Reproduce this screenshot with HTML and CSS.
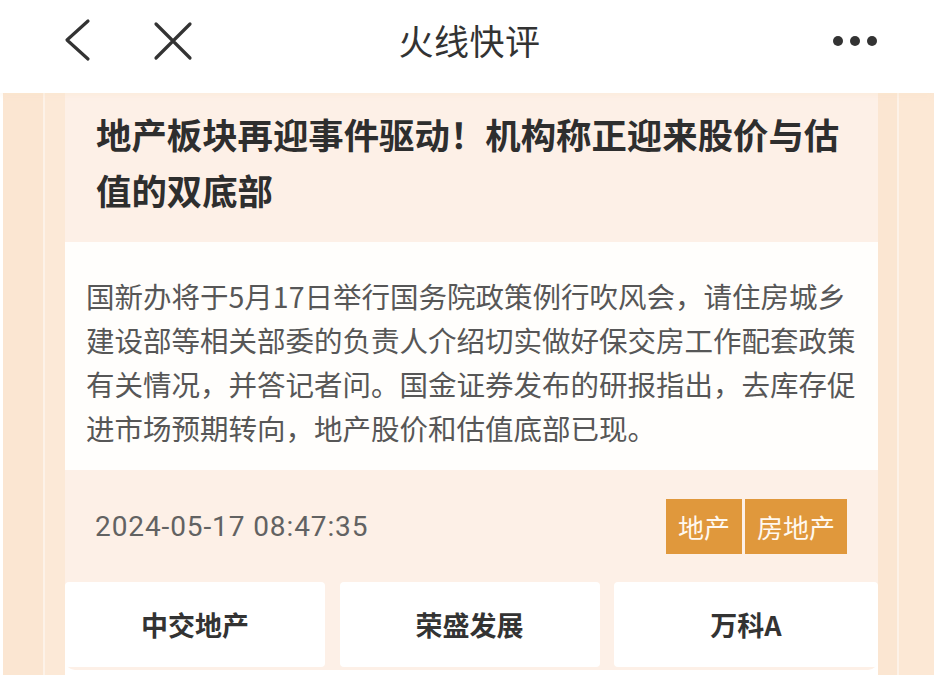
FILE: index.html
```html
<!DOCTYPE html>
<html lang="zh-CN">
<head>
<meta charset="utf-8">
<title>火线快评</title>
<link rel="stylesheet" href="styles.css">
</head>
<body>
<header class="topbar">
  <div class="nav-left">
    <svg class="icon back" width="30" height="44" viewBox="0 0 30 44"><path d="M26 3 L5 22 L26 41" fill="none" stroke="#333" stroke-width="3.2" stroke-linecap="round" stroke-linejoin="round"/></svg>
    <svg class="icon close" width="40" height="40" viewBox="0 0 40 40"><path d="M3 3 L37 37 M37 3 L3 37" fill="none" stroke="#333" stroke-width="3.2" stroke-linecap="round"/></svg>
  </div>
  <h1 class="page-title">火线快评</h1>
  <div class="nav-right">
    <span class="dot"></span><span class="dot"></span><span class="dot"></span>
  </div>
</header>
<main class="page">
  <article class="card">
    <h2 class="headline">地产板块再迎事件驱动！机构称正迎来股价与估值的双底部</h2>
    <div class="summary">
      <p>国新办将于5月17日举行国务院政策例行吹风会，请住房城乡建设部等相关部委的负责人介绍切实做好保交房工作配套政策有关情况，并答记者问。国金证券发布的研报指出，去库存促进市场预期转向，地产股价和估值底部已现。</p>
    </div>
    <div class="meta">
      <span class="time">2024-05-17 08:47:35</span>
      <div class="tags">
        <span class="tag">地产</span>
        <span class="tag">房地产</span>
      </div>
    </div>
    <div class="stocks">
      <div class="stock">中交地产</div>
      <div class="stock">荣盛发展</div>
      <div class="stock">万科A</div>
    </div>
  </article>
</main>
</body>
</html>
```

FILE: styles.css
```css
* { box-sizing: border-box; }
html, body {
  margin: 0;
  padding: 0;
}
body {
  width: 934px;
  height: 675px;
  overflow: hidden;
  background: #ffffff;
  font-family: "Noto Sans CJK SC", "Noto Sans", sans-serif;
  color: #333;
}
.topbar {
  height: 93px;
  display: flex;
  align-items: center;
  justify-content: space-between;
  padding: 0 57px 14px 62px;
  background: #fff;
  position: relative;
  box-shadow: 0 2px 6px rgba(250, 225, 200, 0.35);
  z-index: 1;
}
.nav-left {
  display: flex;
  align-items: center;
  gap: 61px;
  width: 200px;
}
.icon { display: block; }
.close { margin-top: 2px; }
.page-title {
  margin: 0;
  font-size: 35px;
  font-weight: 400;
  color: #333;
  letter-spacing: 0.5px;
  line-height: 1;
}
.nav-right {
  width: 200px;
  display: flex;
  justify-content: flex-end;
  gap: 7px;
  padding-top: 2px;
}
.dot {
  width: 10px;
  height: 10px;
  border-radius: 50%;
  background: #333;
}
.page {
  height: 582px;
  padding: 0 56px 0 65px;
  background:
    linear-gradient(to right,
      #ffffff 0, #ffffff 3px,
      #fbe6d2 3px, #fbe6d2 43px,
      #fdf2e8 43px, #fdf2e8 45px,
      #fce9d7 45px, #fce9d7 65px,
      transparent 65px, transparent 878px,
      #fbe6d2 878px, #fbe6d2 897px,
      #fdf2e8 897px, #fdf2e8 899px,
      #fce8d5 899px);
}
.card {
  width: 813px;
  background: #fdf0e7;
  border-radius: 0 0 10px 10px;
}
.headline {
  margin: 0;
  padding: 13px 30px 24px 31px;
  font-size: 35.4px;
  line-height: 56px;
  font-weight: 700;
  color: #2e2e2e;
}
.summary {
  background: #fffefc;
  padding: 32px 21px 20px 21px;
}
.summary p {
  margin: 0;
  font-size: 28.5px;
  line-height: 44px;
  color: #575757;
}
.meta {
  height: 112px;
  display: flex;
  align-items: center;
  justify-content: space-between;
  padding: 0 31px 0 30px;
}
.time {
  font-family: "Roboto", "Noto Sans", sans-serif;
  font-size: 28px;
  letter-spacing: 0.9px;
  color: #626262;
}
.tags {
  display: flex;
  gap: 3px;
}
.tag {
  height: 55px;
  display: flex;
  align-items: center;
  padding: 0 12px;
  background: #e0983c;
  color: #fff8ef;
  font-size: 26px;
}
.stocks {
  display: grid;
  grid-template-columns: 260px 260px 1fr;
  column-gap: 14.5px;
  padding-bottom: 3px;
}
.stock {
  height: 85px;
  display: flex;
  align-items: center;
  justify-content: center;
  background: #fff;
  border-radius: 4px;
  font-size: 27px;
  font-weight: 700;
  color: #333;
}
```
